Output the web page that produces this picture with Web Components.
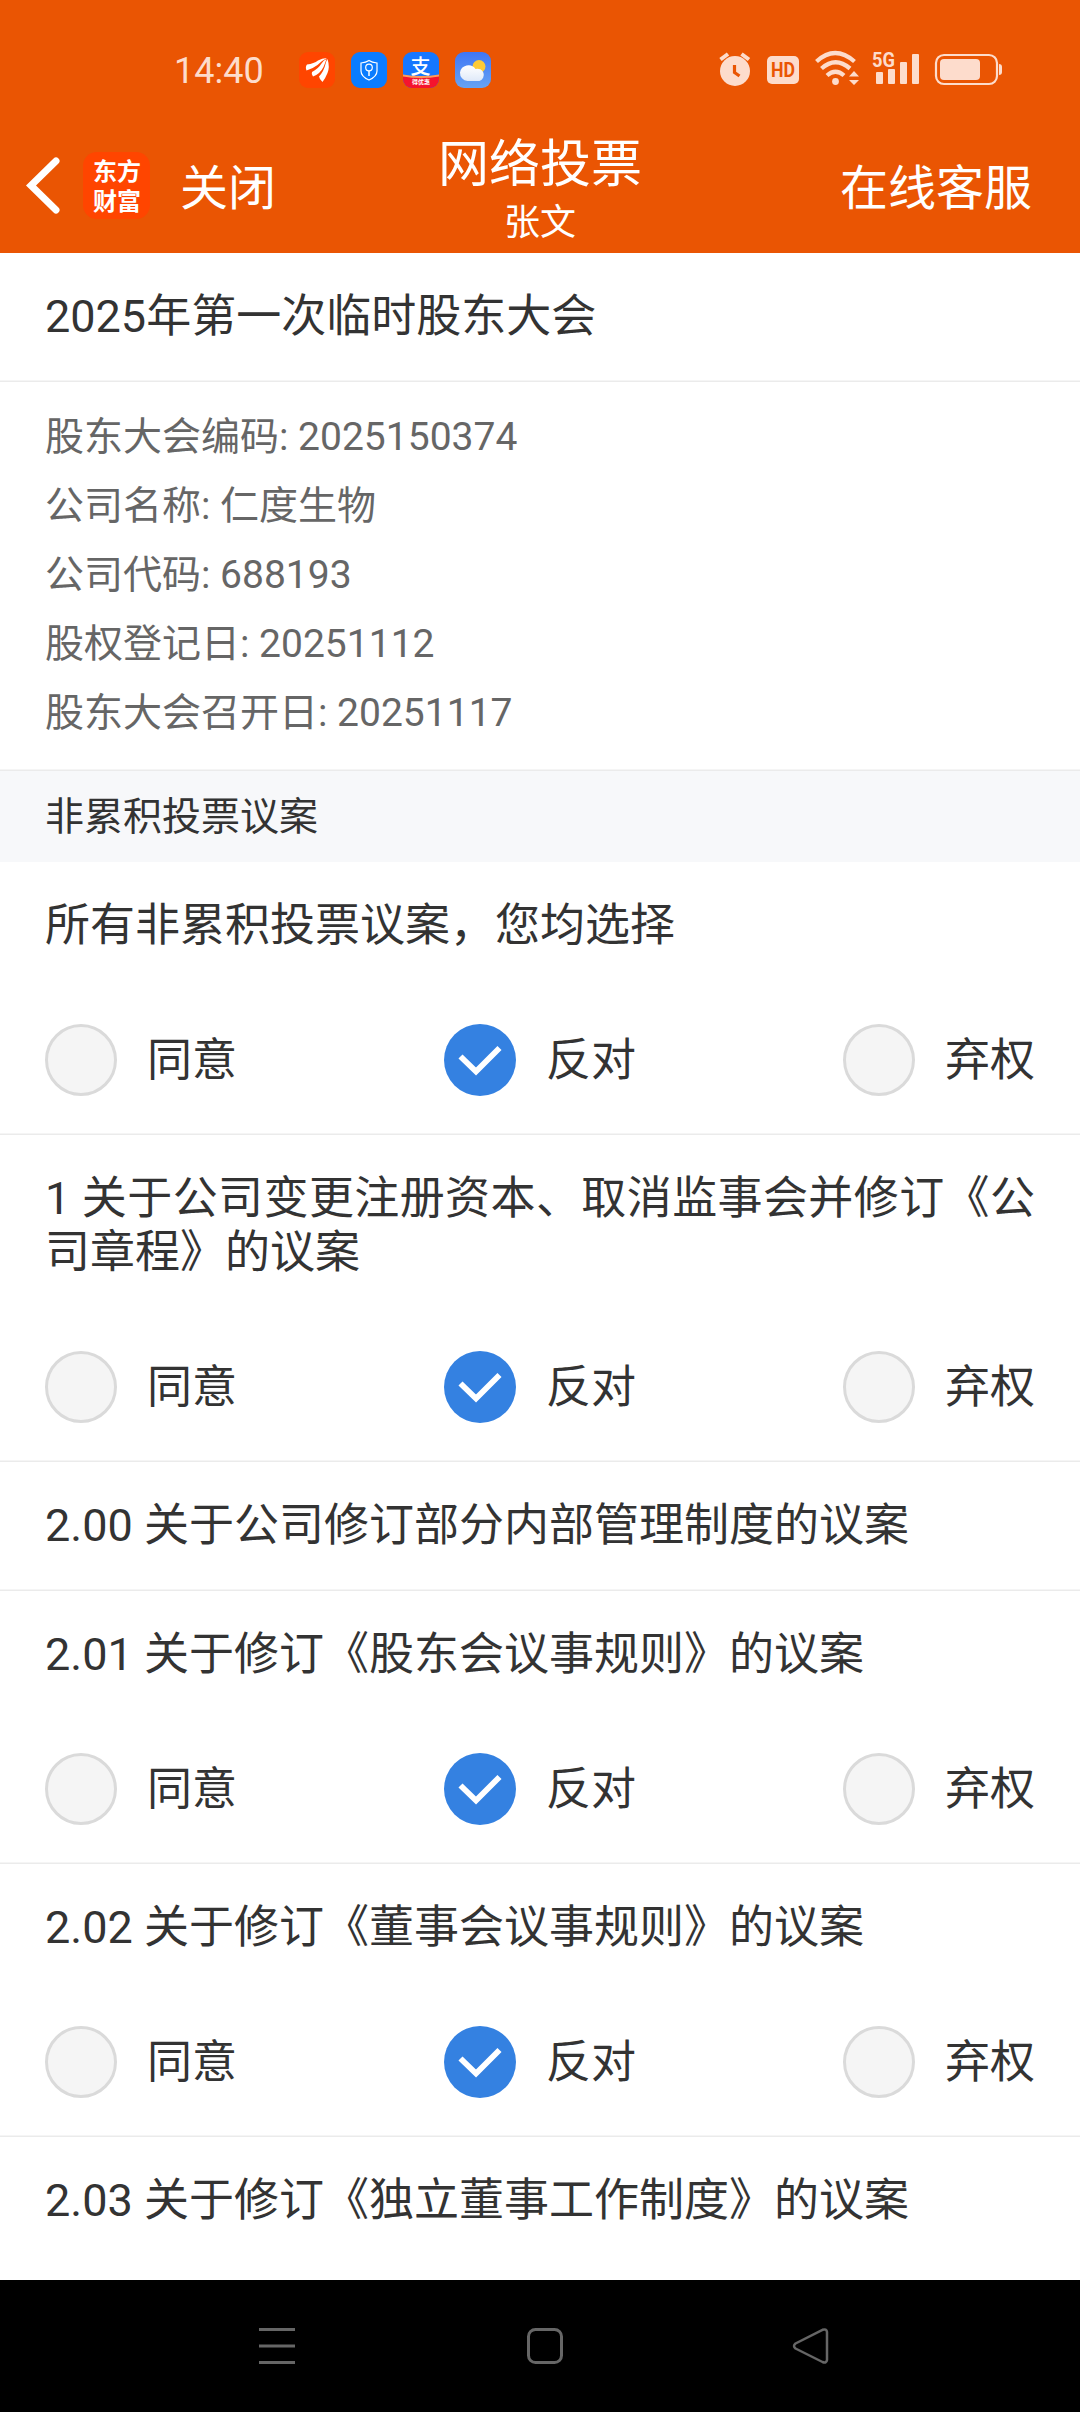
<!DOCTYPE html>
<html lang="zh-CN">
<head>
<meta charset="utf-8">
<title>网络投票</title>
<style>
html,body{margin:0;padding:0;background:#fff}
body{width:1080px;height:2412px;overflow:hidden;font-family:Roboto,"Noto Sans CJK SC",sans-serif;color:#333}
</style>
</head>
<body>
<vote-app></vote-app>
<script>
const define = (name, css, html) => {
  customElements.define(name, class extends HTMLElement {
    constructor() {
      super();
      const t = document.createElement('template');
      t.innerHTML = `<style>*{box-sizing:border-box}svg{display:block;flex:none;overflow:visible}${css}</style>` +
        (typeof html === 'function' ? html(this) : html);
      this.attachShadow({mode: 'open'}).append(t.content.cloneNode(true));
    }
  });
};

define('status-bar', `
:host{display:flex;justify-content:space-between;height:120px;padding:0 78px 0 174px;color:#fddccc}
.time{font-size:36px;line-height:42px;width:125px;padding-top:50px;white-space:nowrap}
.left,.right{display:flex}
.apps{display:flex;gap:16px;padding-top:52px}
.right{padding-top:50px}
text{font-family:Roboto,"Noto Sans CJK SC",sans-serif}
`, `
<div class="left">
  <div class="time">14:40</div>
  <div class="apps">
    <svg width="36" height="36" viewBox="0 0 36 36"><rect width="36" height="36" rx="9" fill="#ff4500"/><g fill="#fff"><path d="M7.500 18.500Q6 15 8 12.500Q15 11.500 19 8.500Q23 6 28 6Q22 9 18.500 13Q14 16.500 7.500 18.500Z"/><path d="M14 24.500Q12 22.500 13 20Q19 17 22.500 11.500Q24.500 8 27.500 7Q26.500 10 24.500 15Q21 22 14 24.500Z"/><path d="M23.500 30Q20.500 27.500 20 24.500Q25 19 26.500 12Q27 9 28.500 7Q31 15 28.500 21Q26.500 26 23.500 30Z"/></g></svg>
    <svg width="36" height="36" viewBox="0 0 36 36"><rect width="36" height="36" rx="9" fill="#0a7cff"/><g fill="none" stroke="#fff" stroke-width="1.200"><path d="M18 8.500Q21 10.500 26 11V19Q26 24.500 18 28Q10 24.500 10 19V11Q15 10.500 18 8.500Z"/><circle cx="18" cy="15.500" r="3.300"/><path d="M18 19V24" stroke-width="1.500"/></g></svg>
    <svg width="36" height="36" viewBox="0 0 36 36"><defs><clipPath id="a"><rect width="36" height="36" rx="9"/></clipPath></defs><g clip-path="url(#a)"><rect width="36" height="36" fill="#1677ff"/><path d="M0 24Q18 27 36 24V36H0Z" fill="#f5142d"/><path d="M0 22.500Q18 25.500 36 22.500V24.500Q18 27.500 0 24.500Z" fill="#ff9a5a"/></g><text x="17.500" y="21.500" font-size="20" font-weight="500" text-anchor="middle" fill="#fff">支</text><text x="18" y="32.300" font-size="6" font-weight="700" text-anchor="middle" fill="#fff">得优惠</text></svg>
    <svg width="36" height="36" viewBox="0 0 36 36"><defs><linearGradient id="b" x2="0" y2="1"><stop stop-color="#3f76f5"/><stop offset="1" stop-color="#67a3f4"/></linearGradient><linearGradient id="c" x2="0" y2="1"><stop stop-color="#fff"/><stop offset="1" stop-color="#dfe9f8"/></linearGradient></defs><rect width="36" height="36" rx="9" fill="url(#b)"/><circle cx="24" cy="14.500" r="6.500" fill="#ffcb35"/><path d="M12.500 29A8 8 0 0 1 5 20.500A8.600 8.600 0 0 1 20.500 17A6.200 6.200 0 0 1 24.500 29Z" fill="url(#c)"/></svg>
  </div>
</div>
<div class="right">
  <svg width="48" height="36" viewBox="719 50 48 36"><circle cx="735" cy="71" r="15" fill="#fddccc"/><path d="M720.500 59.500L728 54M741.500 54L749 59.500" stroke="#fddccc" stroke-width="4"/><path d="M734.500 65V72.500L739.500 76" fill="none" stroke="#ea5503" stroke-width="3.200"/></svg>
  <svg width="48" height="36" viewBox="767 50 48 36"><rect x="767" y="56" width="32" height="28" rx="5" fill="#fddccc"/><text x="783" y="77.300" font-size="20" font-weight="700" text-anchor="middle" textLength="24" lengthAdjust="spacingAndGlyphs" fill="#ea5503">HD</text></svg>
  <svg width="57" height="36" viewBox="815 50 57 36"><g fill="none" stroke="#fddccc" stroke-width="4.300"><path d="M816.500 61.500Q835 44.500 854.500 61.500"/><path d="M821.500 68.500Q835.500 56 850 68.500"/><path d="M827 75.500Q835.500 68 844 75.500"/></g><circle cx="835.500" cy="81.500" r="3.400" fill="#fddccc"/><path d="M849 76.500L854 71L859 76.500ZM849 80L854 85L859 80Z" fill="#fddccc"/></svg>
  <svg width="63" height="36" viewBox="872 50 63 36"><text x="872" y="66.500" font-size="19.500" font-weight="700" textLength="23" lengthAdjust="spacingAndGlyphs" fill="#fddccc">5G</text><g fill="#fddccc"><rect x="876" y="72" width="7" height="12" rx="1"/><rect x="888" y="69" width="7" height="15" rx="1"/><rect x="900" y="62" width="7" height="22" rx="1"/><rect x="912" y="54" width="7" height="30" rx="1"/></g></svg>
  <svg width="67" height="36" viewBox="935 50 67 36"><rect x="936" y="55" width="61" height="29" rx="8" fill="none" stroke="#fddccc" stroke-width="2.200"/><rect x="940" y="59" width="40" height="21" rx="4" fill="#fddccc"/><path d="M999 64Q1002 64 1002 67V72Q1002 75 999 75Z" fill="#fddccc"/></svg>
</div>`);

define('title-bar', `
:host{display:flex;justify-content:space-between;height:133px;color:#fff;white-space:nowrap}
.side{display:flex;width:360px}
.left{padding:32px 0 0 27px}
.back{margin:6px 24px 0 0}
.logo{width:67px;height:67px;border-radius:14px;background:#ff4500;padding:3px 0 0 1px;font:700 24px/30px "Noto Sans CJK SC",sans-serif;text-align:center}
.close{margin-left:30px;padding-top:1px;font-size:48px;line-height:72px}
.mid{text-align:center}
h1{margin:11px 0 0;font-weight:400;font-size:51px;line-height:68px}
p{margin:3px 0 0;font-size:36px;line-height:42px}
.right{justify-content:flex-end;padding:33px 48px 0 0;font-size:48px;line-height:72px}
`, `
<div class="side left"><svg class="back" width="32" height="56" viewBox="0 0 32 56"><path d="M29 3L4 27.500L29 52" fill="none" stroke="#fff" stroke-width="7" stroke-linecap="round"/></svg>
<div class="logo">东方<br>财富</div><div class="close">关闭</div></div>
<div class="mid"><h1><slot></slot></h1><p><slot name="user"></slot></p></div>
<div class="side right">在线客服</div>`);

define('row-title', `
:host{display:block;padding:37px 45px 0;font-size:45px;line-height:54px;text-align:justify}
`, `<slot></slot>`);

define('list-item', `
:host{display:block;border-bottom:1px solid #ebebeb;box-shadow:inset 0 -1px #f5f5f5;padding-bottom:38px}
:host([solo]){padding-bottom:37px}
:host(:last-child){border-bottom:0;box-shadow:none}
`, `<slot></slot>`);

define('info-list', `
:host{display:block;height:389px;box-sizing:border-box;padding:21px 45px 0;border-bottom:1px solid #ebebeb;box-shadow:inset 0 -1px #f5f5f5;font-size:39px;line-height:69px;color:#666}
`, `<slot></slot>`);

define('section-head', `
:host{display:block;height:91px;padding-left:45px;background:#f7f8fa;font-size:39px;line-height:93px}
`, `<slot></slot>`);

define('vote-option', `
:host{display:flex;align-items:center;gap:30px;font-size:45px;line-height:54px;height:72px}
.dot{width:72px;height:72px;border-radius:50%;border:3px solid #dadada;background:#f5f5f5}
span{padding-top:2px}
`, el => (el.hasAttribute('checked')
  ? `<svg width="72" height="72" viewBox="0 0 72 72"><circle cx="36" cy="36" r="36" fill="#3481e1"/><path d="M16.500 32.500L32 47.500L55.500 24" fill="none" stroke="#fff" stroke-width="5.800"/></svg>`
  : `<div class="dot"></div>`) + `<span><slot></slot></span>`);

define('vote-options', `
:host{display:flex;justify-content:space-between;padding:71px 45px 0}
`, `<vote-option>同意</vote-option><vote-option checked>反对</vote-option><vote-option>弃权</vote-option>`);

define('system-nav', `
:host{display:flex;justify-content:space-between;height:132px;box-sizing:border-box;padding:48px 251px 0 259px;background:#000}
g{fill:none;stroke:#666;stroke-width:3}
.home{margin-left:2px}
`, `
<svg width="36" height="36"><g><path d="M0 1.500H36M0 18H36M0 34.500H36"/></g></svg>
<svg class="home" width="36" height="36"><g><rect x="1.500" y="1.500" width="33" height="33" rx="7"/></g></svg>
<svg width="36" height="36"><g stroke-linejoin="round"><path d="M2.500 15.500L29.500 1.800Q33.500 0.500 34 4V32Q33.500 35.500 29.500 34L2.500 20.500Q-0.500 18 2.500 15.500Z" stroke-width="2.500"/></g></svg>`);

define('vote-app', `
:host{display:flex;flex-direction:column;width:1080px;height:2412px;background:#fff}
header{background:#ea5503;flex:none}
main{flex:1;min-height:0;overflow:hidden}
`, `
<header><status-bar></status-bar><title-bar>网络投票<span slot="user">张文</span></title-bar></header>
<main>
<list-item solo><row-title>2025年第一次临时股东大会</row-title></list-item>
<info-list><div>股东大会编码: 2025150374</div><div>公司名称: 仁度生物</div><div>公司代码: 688193</div><div>股权登记日: 20251112</div><div>股东大会召开日: 20251117</div></info-list>
<section-head>非累积投票议案</section-head>
<list-item><row-title>所有非累积投票议案，您均选择</row-title><vote-options></vote-options></list-item>
<list-item><row-title>1 关于公司变更注册资本、取消监事会并修订《公司章程》的议案</row-title><vote-options></vote-options></list-item>
<list-item solo><row-title>2.00 关于公司修订部分内部管理制度的议案</row-title></list-item>
<list-item><row-title>2.01 关于修订《股东会议事规则》的议案</row-title><vote-options></vote-options></list-item>
<list-item><row-title>2.02 关于修订《董事会议事规则》的议案</row-title><vote-options></vote-options></list-item>
<list-item solo><row-title>2.03 关于修订《独立董事工作制度》的议案</row-title></list-item>
</main>
<system-nav></system-nav>`);
</script>
</body>
</html>
